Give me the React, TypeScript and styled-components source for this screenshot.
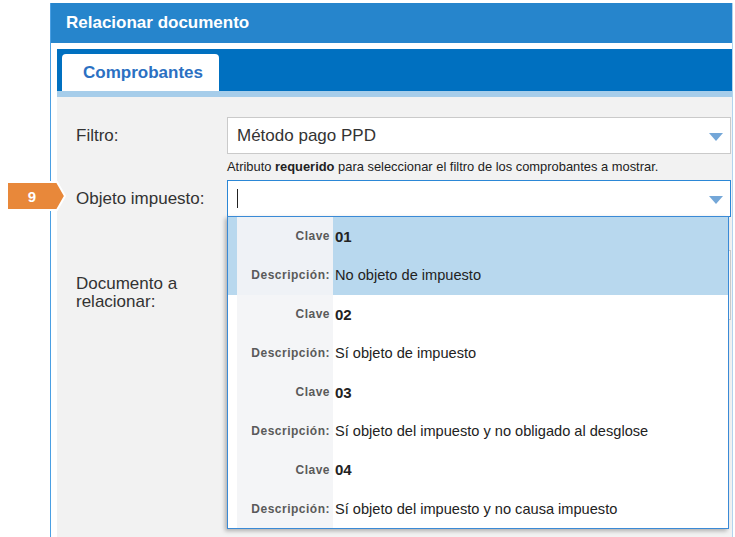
import React from "react";
import styled, { createGlobalStyle } from "styled-components";

const GlobalStyle = createGlobalStyle`
  html, body {
    margin: 0;
    padding: 0;
    background: #ffffff;
    overflow: hidden;
  }
  body {
    font-family: "Liberation Sans", Arial, sans-serif;
    color: #333333;
  }
`;

const Page = styled.div`
  position: relative;
  box-sizing: border-box;
  height: 537px;
  width: 735px;
  padding: 3px 2px 0 50px;
`;

const Panel = styled.div`
  box-sizing: border-box;
  height: 100%;
  display: flex;
  flex-direction: column;
  border-left: 1px solid #4a9fe3;
  border-right: 1px solid #b3d3ee;
`;

const Header = styled.div`
  height: 40px;
  flex: none;
  background: #2685cc;
  color: #ffffff;
  font-weight: bold;
  font-size: 17px;
  display: flex;
  align-items: center;
  padding-left: 15px;
`;

const Body = styled.div`
  flex: 1;
  display: flex;
  flex-direction: column;
  padding: 6px 0 0 6px;
  background: #ffffff;
`;

const TabBar = styled.div`
  flex: none;
  box-sizing: border-box;
  height: 48px;
  background: #0070c0;
  display: flex;
  align-items: flex-end;
  padding-left: 5px;
  border-bottom: 6px solid #a6cdea;
`;

const Tab = styled.div`
  box-sizing: border-box;
  width: 157px;
  height: 37px;
  background: #ffffff;
  border-radius: 4px 4px 0 0;
  color: #2b70c2;
  font-weight: bold;
  font-size: 17px;
  display: flex;
  align-items: center;
  padding-left: 21px;
`;

const Content = styled.div`
  flex: 1;
  position: relative;
  background: #f2f2f2;
  padding: 20px 1px 0 19px;
`;

const FormRow = styled.div<{ $gap?: number; $top?: boolean }>`
  display: grid;
  grid-template-columns: 151px 1fr;
  align-items: ${(p) => (p.$top ? "start" : "center")};
  margin-top: ${(p) => p.$gap ?? 0}px;
`;

const Label = styled.div<{ $pad?: number }>`
  font-size: 17px;
  line-height: 18px;
  color: #333333;
  padding-top: ${(p) => p.$pad ?? 0}px;
`;

const Select = styled.div<{ $focused?: boolean }>`
  position: relative;
  box-sizing: border-box;
  height: 37px;
  background: #ffffff;
  border: 1px solid ${(p) => (p.$focused ? "#2b87d6" : "#cacaca")};
  display: flex;
  align-items: center;
  padding-left: 9px;
  font-size: 17px;
  color: #333333;
`;

const Arrow = styled.span`
  position: absolute;
  right: 7px;
  top: 15px;
  width: 0;
  height: 0;
  border-left: 7px solid transparent;
  border-right: 7px solid transparent;
  border-top: 8px solid #74a7d8;
`;

const Caret = styled.span`
  display: block;
  width: 1px;
  height: 19px;
  background: #222222;
`;

const Help = styled.div`
  margin: 6px 0 0 151px;
  font-size: 12.9px;
  line-height: 14px;
  color: #222222;
  b {
    font-weight: bold;
  }
`;

const Field = styled.div`
  box-sizing: border-box;
  height: 70px;
  background: #ffffff;
  border: 1px solid #cccccc;
`;

const Dropdown = styled.div`
  position: absolute;
  top: 100%;
  left: -1px;
  right: 1px;
  box-sizing: border-box;
  background: #ffffff;
  border: 1px solid #3a8ad6;
  box-shadow: -2px 2px 4px rgba(0, 0, 0, 0.28);
  z-index: 5;
`;

const Item = styled.div<{ $active?: boolean }>`
  display: grid;
  grid-template-columns: 9px 96px 1fr;
  grid-auto-rows: 38.9px;
  background: ${(p) => (p.$active ? "#b8d8ee" : "#ffffff")};
`;

const KeyCell = styled.div<{ $active?: boolean }>`
  grid-column: 2;
  background: ${(p) => (p.$active ? "#eff2f6" : "#f4f5f7")};
  display: flex;
  align-items: center;
  justify-content: flex-end;
  padding-right: 3px;
  font-size: 12px;
  font-weight: bold;
  color: #5a5a5a;
  letter-spacing: 0.5px;
`;

const ValueCell = styled.div<{ $strong?: boolean }>`
  grid-column: 3;
  display: flex;
  align-items: center;
  padding-left: 2px;
  font-size: ${(p) => (p.$strong ? "15px" : "14.6px")};
  font-weight: ${(p) => (p.$strong ? "bold" : "normal")};
  color: #222222;
`;

const Badge = styled.div`
  position: absolute;
  left: 5px;
  top: 180px;
  width: 64px;
  height: 32px;
  z-index: 10;
  svg {
    display: block;
  }
`;

const BadgeText = styled.span`
  position: absolute;
  left: 2px;
  width: 50px;
  top: 0;
  height: 32px;
  display: flex;
  align-items: center;
  justify-content: center;
  color: #ffffff;
  font-weight: bold;
  font-size: 15px;
`;

const options = [
  { clave: "01", desc: "No objeto de impuesto" },
  { clave: "02", desc: "Sí objeto de impuesto" },
  { clave: "03", desc: "Sí objeto del impuesto y no obligado al desglose" },
  { clave: "04", desc: "Sí objeto del impuesto y no causa impuesto" },
];

export default function App() {
  return (
    <>
      <GlobalStyle />
      <Page>
        <Panel>
          <Header>Relacionar documento</Header>
          <Body>
            <TabBar>
              <Tab>Comprobantes</Tab>
            </TabBar>
            <Content>
              <FormRow>
                <Label>Filtro:</Label>
                <Select>
                  Método pago PPD
                  <Arrow />
                </Select>
              </FormRow>
              <Help>
                Atributo <b>requerido</b> para seleccionar el filtro de los
                comprobantes a mostrar.
              </Help>
              <FormRow $gap={6}>
                <Label>Objeto impuesto:</Label>
                <Select $focused>
                  <Caret />
                  <Arrow />
                  <Dropdown>
                    {options.map((o, i) => (
                      <Item key={o.clave} $active={i === 0}>
                        <KeyCell $active={i === 0}>Clave</KeyCell>
                        <ValueCell $strong>{o.clave}</ValueCell>
                        <KeyCell $active={i === 0}>Descripción:</KeyCell>
                        <ValueCell>{o.desc}</ValueCell>
                      </Item>
                    ))}
                  </Dropdown>
                </Select>
              </FormRow>
              <FormRow $gap={33} $top>
                <Label $pad={25}>
                  Documento a<br />
                  relacionar:
                </Label>
                <Field />
              </FormRow>
            </Content>
          </Body>
        </Panel>
        <Badge>
          <svg width="64" height="32" viewBox="0 0 64 32">
            <polygon
              points="2,2 52,2 60,16 52,30 2,30"
              fill="#e8883a"
              stroke="#ffffff"
              strokeWidth="2"
              strokeLinejoin="miter"
            />
          </svg>
          <BadgeText>9</BadgeText>
        </Badge>
      </Page>
    </>
  );
}
